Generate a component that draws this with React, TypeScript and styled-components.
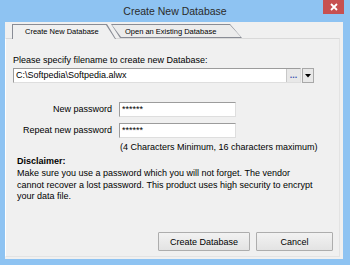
import React from 'react'
import styled, { createGlobalStyle } from 'styled-components'

const GlobalStyle = createGlobalStyle`
  html, body {
    margin: 0;
    padding: 0;
    background: #8ec3f2;
  }
  body {
    font-family: 'Liberation Sans', Arial, sans-serif;
    font-size: 9px;
    color: #000;
  }
`

const Window = styled.div`
  width: 350px;
  height: 265px;
  background: #8ec3f2;
  display: flex;
  flex-direction: column;
  overflow: hidden;
`

const TitleBar = styled.div`
  height: 22px;
  position: relative;
  display: flex;
  align-items: center;
  justify-content: center;
  font-size: 10.5px;
  color: #2b2b2b;
`

const CloseButton = styled.div`
  position: absolute;
  top: 0;
  right: 6px;
  width: 21px;
  height: 14px;
  background: #c75050;
  display: flex;
  align-items: center;
  justify-content: center;
`

const Client = styled.div`
  flex: 1;
  margin: 0 7px 6px 5px;
  padding: 2px 3px 2px 0;
  background: #f0f0f0;
  display: flex;
  flex-direction: column;
`

const TabStrip = styled.div`
  display: flex;
  padding-left: 7px;
  height: 14px;
`

const Tab = styled.div<{ $active?: boolean; $slantLeft?: boolean; $width: number }>`
  position: relative;
  width: ${p => p.$width}px;
  height: ${p => (p.$active ? 15 : 14)}px;
  margin-left: ${p => (p.$slantLeft ? -5 : 0)}px;
  z-index: ${p => (p.$active ? 2 : 1)};
  background: #898c95;
  clip-path: ${p =>
    p.$slantLeft
      ? 'polygon(0 0, calc(100% - 12px) 0, 100% 100%, 9px 100%)'
      : 'polygon(0 0, calc(100% - 9px) 0, 100% 100%, 0 100%)'};
  display: flex;
  align-items: center;
  padding-left: ${p => (p.$slantLeft ? 14 : 13)}px;
  padding-bottom: ${p => (p.$active ? 1 : 0)}px;
  box-sizing: border-box;

  &::before {
    content: '';
    position: absolute;
    top: 1px;
    left: 1px;
    right: 0;
    bottom: ${p => (p.$active ? 0 : 1)}px;
    background: ${p => (p.$active ? '#f0f0f0' : '#ececec')};
    clip-path: ${p =>
      p.$slantLeft
        ? 'polygon(0 0, calc(100% - 12px) 0, calc(100% - 1px) 100%, 9px 100%)'
        : 'polygon(0 0, calc(100% - 10px) 0, calc(100% - 1px) 100%, 0 100%)'};
  }
  & > span {
    position: relative;
    font-size: 7.5px;
    color: #000;
    white-space: nowrap;
  }
`

const Panel = styled.div`
  flex: 1;
  border: 1px solid #ffffff;
  border-right-color: #e3e3e3;
  border-bottom-color: #e3e3e3;
  border-top-color: #d9d9d9;
  padding: 16px 6px 5px 7px;
  display: flex;
  flex-direction: column;
  position: relative;
  z-index: 1;
`

const Label = styled.div`
  line-height: 11px;
  white-space: nowrap;
`

const FileRow = styled.div`
  display: flex;
  margin-top: 2px;
  height: 15px;
`

const Field = styled.div<{ $width: number }>`
  width: ${p => p.$width}px;
  height: 15px;
  box-sizing: border-box;
  background: #fff;
  border: 1px solid;
  border-color: #9c9c9c #dedede #dedede #9c9c9c;
  display: flex;
  align-items: center;
  padding-left: 2px;
  line-height: 11px;
  font-size: 9px;
`

const FieldText = styled.span`
  flex: 1;
  white-space: nowrap;
`

const DotsButton = styled.div`
  width: 14px;
  height: 13px;
  background: #e8e8e8;
  border-left: 1px solid #c8c8c8;
  display: flex;
  align-items: flex-end;
  justify-content: center;
  color: #3d55b0;
  font-size: 9px;
  font-weight: bold;
  line-height: 9px;
  padding-bottom: 2px;
  box-sizing: border-box;
`

const DropButton = styled.div`
  width: 12px;
  height: 15px;
  margin-left: 1px;
  box-sizing: border-box;
  background: #e8e8e8;
  border: 1px solid #a8a8a8;
  display: flex;
  align-items: center;
  justify-content: center;
`

const FormGrid = styled.div`
  display: grid;
  grid-template-columns: 99px 117px;
  column-gap: 7px;
  row-gap: 6px;
  margin-top: 19px;
  align-items: center;
`

const RowLabel = styled.div`
  text-align: right;
  white-space: nowrap;
  line-height: 11px;
`

const Hint = styled.div`
  margin: 4px 0 0 107px;
  line-height: 11px;
  white-space: nowrap;
`

const DisclaimerTitle = styled.div`
  margin: 3px 0 0 4px;
  font-weight: bold;
  line-height: 11px;
`

const DisclaimerText = styled.p`
  margin: 1px 0 0 4px;
  width: 302px;
  line-height: 11.5px;
`

const ButtonRow = styled.div`
  margin-top: auto;
  display: flex;
  justify-content: flex-end;
  gap: 6px;
`

const Button = styled.button<{ $width: number }>`
  width: ${p => p.$width}px;
  height: 19px;
  padding: 0;
  font-family: 'Liberation Sans', Arial, sans-serif;
  font-size: 9px;
  color: #000;
  background: linear-gradient(#f2f2f2, #e3e3e3);
  border: 1px solid #adadad;
  border-radius: 1px;
`

export default function App() {
  return (
    <>
      <GlobalStyle />
      <Window>
        <TitleBar>
          Create New Database
          <CloseButton>
            <svg width="8" height="8" viewBox="0 0 8 8">
              <path d="M1 1 L7 7 M7 1 L1 7" stroke="#fff" strokeWidth="1.8" />
            </svg>
          </CloseButton>
        </TitleBar>
        <Client>
          <TabStrip>
            <Tab $active $width={104}>
              <span>Create New Database</span>
            </Tab>
            <Tab $slantLeft $width={131}>
              <span>Open an Existing Database</span>
            </Tab>
          </TabStrip>
          <Panel>
            <Label>Please specify filename to create new Database:</Label>
            <FileRow>
              <Field $width={288}>
                <FieldText>C:\Softpedia\Softpedia.alwx</FieldText>
                <DotsButton>...</DotsButton>
              </Field>
              <DropButton>
                <svg width="6" height="4" viewBox="0 0 6 4">
                  <path d="M0 0 H6 L3 3.5 Z" fill="#000" />
                </svg>
              </DropButton>
            </FileRow>
            <FormGrid>
              <RowLabel>New password</RowLabel>
              <Field $width={117}>
                <FieldText>******</FieldText>
              </Field>
              <RowLabel>Repeat new password</RowLabel>
              <Field $width={117}>
                <FieldText>******</FieldText>
              </Field>
            </FormGrid>
            <Hint>(4 Characters Minimum, 16 characters maximum)</Hint>
            <DisclaimerTitle>Disclaimer:</DisclaimerTitle>
            <DisclaimerText>
              Make sure you use a password which you will not forget. The vendor cannot recover a lost
              password. This product uses high security to encrypt your data file.
            </DisclaimerText>
            <ButtonRow>
              <Button $width={92}>Create Database</Button>
              <Button $width={77}>Cancel</Button>
            </ButtonRow>
          </Panel>
        </Client>
      </Window>
    </>
  )
}
